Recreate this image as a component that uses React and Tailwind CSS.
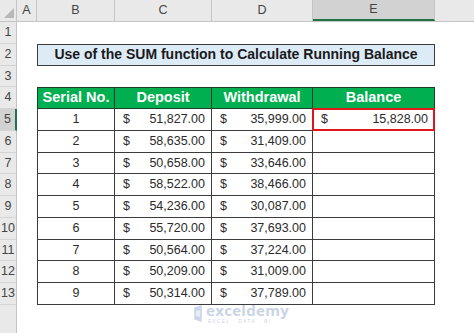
const cols = [
  { key: "A", w: "w-[20px]" },
  { key: "B", w: "w-[78px]" },
  { key: "C", w: "w-[97px]" },
  { key: "D", w: "w-[101px]" },
  { key: "E", w: "w-[122px]" },
];

const data = [
  [1, "51,827.00", "35,999.00", "15,828.00"],
  [2, "58,635.00", "31,409.00"],
  [3, "50,658.00", "33,646.00"],
  [4, "58,522.00", "38,466.00"],
  [5, "54,236.00", "30,087.00"],
  [6, "55,720.00", "37,693.00"],
  [7, "50,564.00", "37,224.00"],
  [8, "50,209.00", "31,009.00"],
  [9, "50,314.00", "37,789.00"],
];

function RowHead({ n, active }) {
  return (
    <div
      className={`w-[17px] shrink-0 h-full flex items-center justify-center text-[12.5px] text-[#444] border-b border-[#d4d4d4] ${
        active ? "bg-[#d2d2d2] border-r-2 border-r-[#217346]" : "bg-[#e9e9e9] border-r border-r-[#c4c4c4]"
      }`}
    >
      {n}
    </div>
  );
}

function Money({ value, w }) {
  return (
    <div className={`${w} shrink-0 h-full flex items-center justify-between pl-2 pr-[6px] border-r border-b border-[#3c3c3c]`}>
      <span>$</span>
      <span>{value}</span>
    </div>
  );
}

export default function App() {
  return (
    <div
      className="relative w-[474px] h-[333px] overflow-hidden bg-white text-[#2b2b2b]"
      style={{ fontFamily: '"Liberation Sans", Arial, sans-serif' }}
    >
      {/* column letters */}
      <div className="flex h-[22px] bg-[#e9e9e9] border-b border-[#c4c4c4]">
        <div className="w-[17px] shrink-0 relative border-r border-[#c4c4c4]">
          <div className="absolute right-[2px] bottom-[3px] w-0 h-0 border-l-[10px] border-l-transparent border-b-[10px] border-b-[#b8b8b8]" />
        </div>
        {cols.map((c) => (
          <div
            key={c.key}
            className={`${c.w} shrink-0 flex items-center justify-center text-[12.5px] text-[#444] border-r border-[#c4c4c4] ${
              c.key === "E" ? "bg-[#d2d2d2] border-b-2 border-b-[#217346]" : ""
            }`}
          >
            {c.key}
          </div>
        ))}
        <div className="flex-1" />
      </div>

      {/* row 1 */}
      <div className="flex h-[21.75px]">
        <RowHead n={1} />
      </div>

      {/* row 2: title */}
      <div className="flex h-[21.75px]">
        <RowHead n={2} />
        <div className="w-[20px] shrink-0" />
        <div className="w-[398px] shrink-0 h-full flex items-center justify-center bg-[#ddebf7] border border-[#3c3c3c] font-bold text-[14px] text-[#1a1a1a]">
          Use of the SUM function to Calculate Running Balance
        </div>
      </div>

      {/* row 3 */}
      <div className="flex h-[21.75px]">
        <RowHead n={3} />
      </div>

      {/* row 4: header */}
      <div className="flex h-[21.75px]">
        <RowHead n={4} />
        <div className="w-[20px] shrink-0" />
        {["Serial No.", "Deposit", "Withdrawal", "Balance"].map((h, i) => (
          <div
            key={h}
            className={`${cols[i + 1].w} shrink-0 h-full flex items-center justify-center bg-[#00b050] text-white font-bold text-[14.5px] border-t border-r border-b border-[#1e3d28] ${
              i === 0 ? "border-l" : ""
            }`}
          >
            {h}
          </div>
        ))}
      </div>

      {/* data rows */}
      {data.map((r, idx) => (
        <div key={r[0]} className="flex h-[21.75px] text-[12.5px]">
          <RowHead n={idx + 5} active={idx === 0} />
          <div className="w-[20px] shrink-0" />
          <div className="w-[78px] shrink-0 h-full flex items-center justify-center border-l border-r border-b border-[#3c3c3c]">
            {r[0]}
          </div>
          <Money value={r[1]} w="w-[97px]" />
          <Money value={r[2]} w="w-[101px]" />
          {r[3] ? (
            <div className="w-[122px] shrink-0 h-full relative flex items-center justify-between pl-2 pr-[6px] border-r border-b border-[#3c3c3c]">
              <div className="absolute -top-px -left-px -right-px -bottom-px border-2 border-[#e0161d]" />
              <span>$</span>
              <span>{r[3]}</span>
            </div>
          ) : (
            <div className="w-[122px] shrink-0 h-full border-r border-b border-[#3c3c3c]" />
          )}
        </div>
      ))}

      {/* row 14 */}
      <div className="flex h-[40px]">
        <div className="w-[17px] shrink-0 h-full bg-[#e9e9e9] border-r border-[#c4c4c4]" />
      </div>

      {/* watermark */}
      <div className="absolute left-[193px] top-[303px] flex items-center gap-[3px] opacity-70 pointer-events-none">
        <svg width="10" height="17" viewBox="0 0 11 20">
          <path d="M1 3 L10 0 L10 20 L1 17 Z" fill="#b9c6de" />
          <path d="M3 7 L8 6 L8 14 L3 13 Z" fill="#dfe6f2" />
        </svg>
        <div className="flex flex-col">
          <span className="text-[15px] leading-[15px] font-bold text-[#b4c2dc] tracking-[0.3px]" style={{ fontFamily: '"Open Sans", sans-serif' }}>
            exceldemy
          </span>
          <span className="text-[4.5px] leading-[5px] mt-[1px] text-[#b4c2dc] tracking-[1.5px] pl-[2px]">EXCEL · DATA · BI</span>
        </div>
      </div>
    </div>
  );
}
